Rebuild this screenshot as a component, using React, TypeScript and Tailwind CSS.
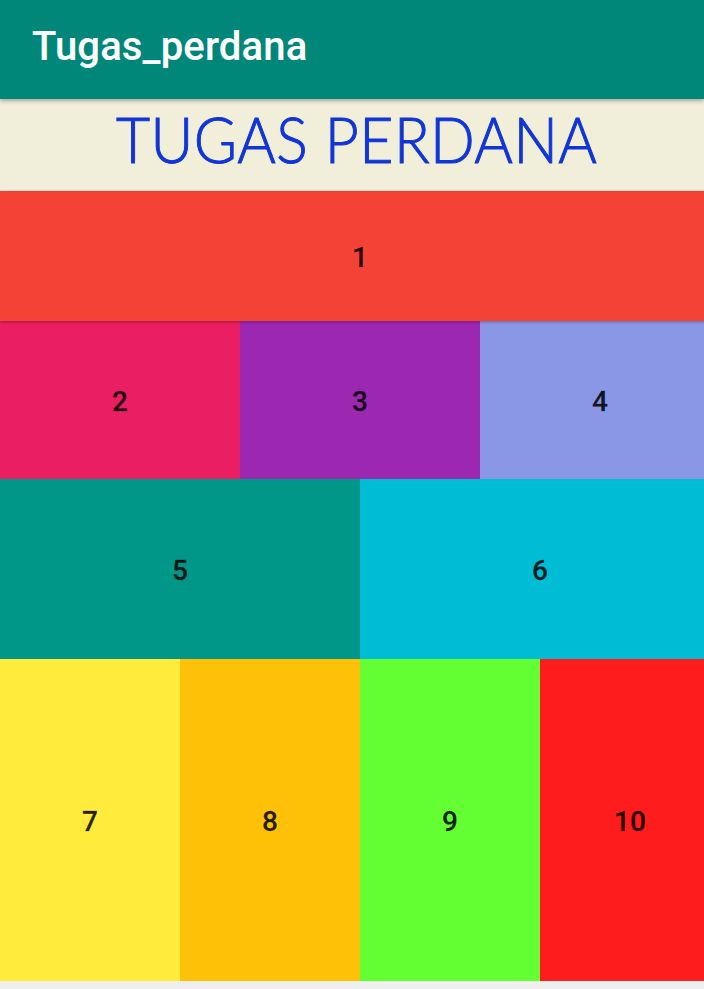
export default function App() {
  const label = "flex items-center justify-center pt-[4px] text-[28px] font-medium text-black/85 [-webkit-text-stroke:0.3px_rgba(0,0,0,0.5)]";
  return (
    <div className="h-[989px] w-[704px] overflow-hidden bg-[#efefef] font-['Roboto',sans-serif]">
      <header className="relative z-20 flex h-[99px] items-center bg-[#00877a] pb-[6px] pl-[32px] shadow-[0_2px_4px_rgba(0,0,0,0.3)]">
        <h1 className="text-[40px] font-medium leading-none tracking-[0.16px] text-white [-webkit-text-stroke:0.1px_white]">Tugas_perdana</h1>
      </header>
      <div className="flex h-[92px] items-start justify-center bg-[#f1eeda] pl-[10px] pt-[2px]">
        <p className="scale-x-[0.92] font-['Lato',sans-serif] text-[64px] font-light leading-[76px] tracking-[0.5px] text-[#1035d8] [-webkit-text-stroke:1px_#1035d8]">TUGAS PERDANA</p>
      </div>
      <div className="w-[720px]">
        <div className={`relative z-10 h-[130px] bg-[#f44336] shadow-[0_1px_3px_rgba(0,0,0,0.3)] ${label}`}>1</div>
        <div className="grid h-[158px] grid-cols-3">
          <div className={`bg-[#e91e63] ${label}`}>2</div>
          <div className={`bg-[#9c27b0] ${label}`}>3</div>
          <div className={`bg-[#8a97e6] ${label}`}>4</div>
        </div>
        <div className="grid h-[180px] grid-cols-2">
          <div className={`bg-[#009688] ${label}`}>5</div>
          <div className={`bg-[#00bcd4] ${label}`}>6</div>
        </div>
        <div className="grid h-[322px] grid-cols-4">
          <div className={`bg-[#ffeb3b] ${label}`}>7</div>
          <div className={`bg-[#ffc107] ${label}`}>8</div>
          <div className={`bg-[#64ff33] ${label}`}>9</div>
          <div className={`bg-[#ff1c1c] ${label}`}>10</div>
        </div>
      </div>
    </div>
  );
}
